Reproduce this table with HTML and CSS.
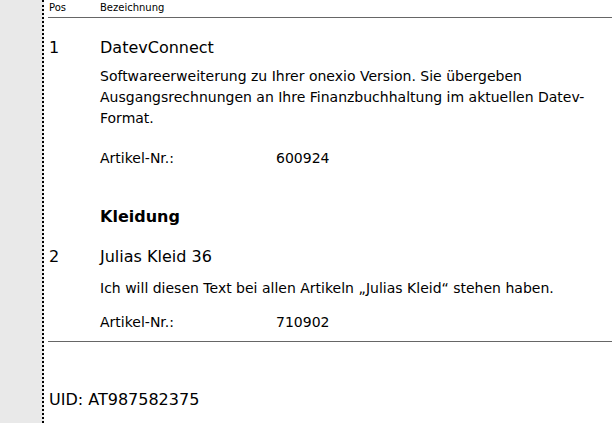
FILE: index.html
```html
<!DOCTYPE html>
<html lang="de">
<head>
  <meta charset="UTF-8" />
  <title>Rechnung – Positionen</title>
  <link rel="stylesheet" href="styles.css">
</head>
<body>
  <div class="gutter"></div>
  <div class="page">
    <div class="head-row">
      <span class="col-pos">Pos</span>
      <span>Bezeichnung</span>
    </div>

    <div class="item">
      <div class="item-title">
        <span class="col-pos">1</span>
        <span>DatevConnect</span>
      </div>
      <p class="item-text">Softwareerweiterung zu Ihrer onexio Version. Sie übergeben Ausgangsrechnungen an Ihre Finanzbuchhaltung im aktuellen Datev-Format.</p>
      <div class="item-meta">
        <span class="meta-label">Artikel-Nr.:</span>
        <span>600924</span>
      </div>
    </div>

    <h3 class="group">Kleidung</h3>

    <div class="item item-next">
      <div class="item-title">
        <span class="col-pos">2</span>
        <span>Julias Kleid 36</span>
      </div>
      <p class="item-text">Ich will diesen Text bei allen Artikeln „Julias Kleid“ stehen haben.</p>
      <div class="item-meta">
        <span class="meta-label">Artikel-Nr.:</span>
        <span>710902</span>
      </div>
    </div>

    <div class="footer">UID: AT987582375</div>
  </div>
</body>
</html>
```

FILE: styles.css
```css
* {
  box-sizing: border-box;
}

body {
  margin: 0;
  display: flex;
  min-height: 100vh;
  font-family: 'DejaVu Sans', sans-serif;
  color: #000;
  background: #fff;
}

.gutter {
  width: 44px;
  flex: none;
  background: #e9e9e9;
  border-right: 2px dotted #000;
}

.page {
  flex: 1;
  padding-left: 4px;
  padding-right: 14px;
}

.head-row,
.item-title,
.item-meta {
  display: flex;
}

.col-pos {
  width: 52px;
  flex: none;
  padding-left: 1px;
}

.head-row {
  font-size: 10px;
  line-height: 12px;
  padding-top: 2px;
  padding-bottom: 3px;
  border-bottom: 1px solid #666;
  margin-right: -14px;
}

.item-title {
  font-size: 16px;
  line-height: 20px;
  margin-top: 20px;
}

.item-text {
  margin: 8px 0 0 52px;
  font-size: 14px;
  line-height: 21px;
}

.item-next .item-text {
  margin-top: 11px;
}

.item-meta {
  margin: 19px 0 0 52px;
  font-size: 14px;
  line-height: 21px;
}

.item-next .item-meta {
  margin-top: 13px;
}

.meta-label {
  width: 176px;
  flex: none;
}

.group {
  margin: 38px 0 0 52px;
  font-size: 16px;
  line-height: 20px;
  font-weight: bold;
}

.footer {
  margin-top: 8px;
  margin-right: -14px;
  padding-top: 48px;
  border-top: 1px solid #666;
  font-size: 16px;
  line-height: 20px;
  padding-left: 1px;
}
```
